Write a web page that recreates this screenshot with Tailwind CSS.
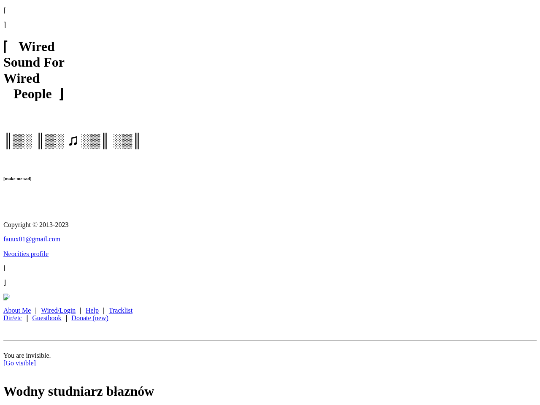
<!DOCTYPE html>
<html lang="en"><head><meta charset="utf-8"><title>Wired Sound For Wired People</title>
<script src="https://cdn.jsdelivr.net/npm/@tailwindcss/browser@4"></script></head>
<body class="bg-white">
<div class="h-[405px] w-[540px] overflow-hidden">
<main class="h-[960px] w-[1280px] origin-top-left scale-[0.421875] px-2 text-[16px] leading-[18.4px] text-black antialiased will-change-transform font-['Liberation_Serif','DejaVu_Sans',serif]">
<div class="h-4"></div>
<p class="h-[34.4px]">⌈</p>
<p class="h-[34.4px]">⌉</p>
<h1 class="mt-[7px] h-[150px] whitespace-pre text-[32px] font-bold leading-[37.5px]"><span class="-ml-px mr-px font-normal [-webkit-text-stroke:1.3px_black]">⌈</span>   Wired
Sound For
Wired
   People  <span class="font-normal [-webkit-text-stroke:1.3px_black]">⌋</span></h1>
<h1 class="mt-[71px] flex h-[40px] whitespace-pre text-[32px] font-bold leading-[40px] [-webkit-text-stroke:0.25px_black]"><span>║▒░ ║▒░ </span><span class="-mr-[3px] flex w-[26.8px] justify-center text-[37px] leading-[37px] [-webkit-text-stroke:0.8px_black]">♫</span><span> ░▒║ ░▒║</span></h1>
<h6 class="mt-[64px] h-[12px] text-[10.72px] font-bold leading-[12px]">[make me sad]</h6>
<p class="mt-[95px] h-[34.4px]">Copyright © 2013-2023</p>
<p class="h-[34.4px]"><a class="text-[#0000ee] underline" href="#">fauux01@gmail.com</a></p>
<p class="h-[34.4px]"><a class="text-[#0000ee] underline" href="#">Neocities profile</a></p>
<p class="h-[34.4px]">⌊</p>
<p class="h-[34.4px]">⌋</p>
<svg class="block h-4 w-4" viewBox="0 0 16 16"><path d="M.5.5h10l5 5v10H.5z" fill="#c5d9f5" stroke="#999"/><path d="M10.500.5v5h5" fill="#fff" stroke="#999"/><path d="M2 7q0-2 2-2 2-2 4 0 2 0 2 2z" fill="#fff"/><path d="M1 15v-2l6-5 5 3-5 4z" fill="#43a047"/><path d="M7 16l9-8v8z" fill="#fff"/></svg>
<nav class="mt-[15px] h-[36.8px]">
<div class="flex"><a class="text-[#0000ee] underline" href="#">About Me</a><span class="w-[23.8px] text-center font-['DejaVu_Sans',sans-serif]">|</span><a class="text-[#0000ee] underline" href="#">Wired/Login</a><span class="w-[23.8px] text-center font-['DejaVu_Sans',sans-serif]">|</span><a class="text-[#0000ee] underline" href="#">Help</a><span class="w-[23.8px] text-center font-['DejaVu_Sans',sans-serif]">|</span><a class="text-[#0000ee] underline" href="#">Tracklist</a></div>
<div class="flex"><a class="text-[#0000ee] underline" href="#">Dir/etc</a><span class="w-[23.8px] text-center font-['DejaVu_Sans',sans-serif]">|</span><a class="text-[#0000ee] underline" href="#">Guestbook</a><span class="w-[23.8px] text-center font-['DejaVu_Sans',sans-serif]">|</span><a class="text-[#0000ee] underline" href="#">Donate (new)</a></div>
</nav>
<hr class="mt-[42px] border-t-2 border-[#bdbdbd]">
<p class="mt-[26px]">You are invisible.<br><a class="text-[#0000ee] underline" href="#">[Go visible]</a></p>
<h1 class="mt-[39px] text-[32px] font-bold leading-[37px]">Wodny studniarz błaznów</h1>
</main>
</div>
</body></html>
